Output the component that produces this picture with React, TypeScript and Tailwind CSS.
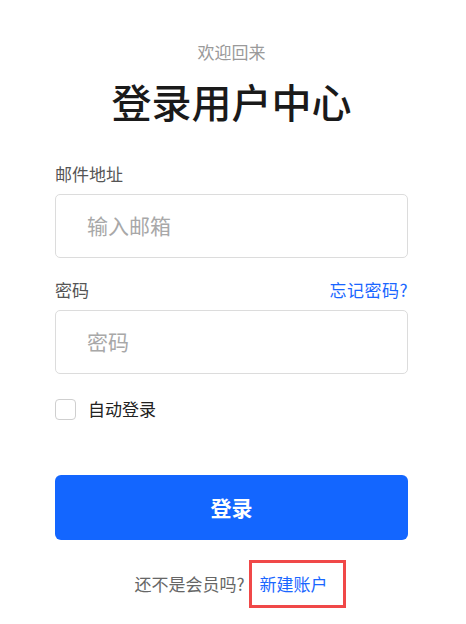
import React from "react";

export default function App() {
  const font = { fontFamily: '"Noto Sans CJK SC", "Noto Sans", sans-serif' };
  return (
    <div className="min-h-[624px] w-[466px] bg-white" style={font}>
      <div className="ml-[55px] w-[353px] pt-[40px] flex flex-col">
        <div className="text-center text-[17px] leading-[24px] text-[#9a9a9a]">欢迎回来</div>
        <div className="mt-[13px] text-center text-[40px] leading-[48px] font-medium text-[#1a1a1a]">登录用户中心</div>

        <div className="mt-[37px] text-[17px] leading-[24px] text-[#555]">邮件地址</div>
        <div className="mt-[8px] h-[64px] rounded-[5px] border border-[#dcdcdc] flex items-center pl-[31px] text-[21px] text-[#a8a8a8]">
          输入邮箱
        </div>

        <div className="mt-[20px] flex justify-between text-[17px] leading-[24px]">
          <span className="text-[#555]">密码</span>
          <span className="text-[#1a66ff] tracking-[0.5px]">忘记密码?</span>
        </div>
        <div className="mt-[8px] h-[64px] rounded-[5px] border border-[#dcdcdc] flex items-center pl-[31px] text-[21px] text-[#a8a8a8]">
          密码
        </div>

        <div className="mt-[23px] flex items-center h-[24px]">
          <div className="w-[21px] h-[21px] rounded-[4px] border-[1.5px] border-[#cfcfcf] bg-white" />
          <span className="ml-[12px] text-[17px] leading-[24px] text-[#222]">自动登录</span>
        </div>

        <div className="mt-[54px] h-[65px] rounded-[6px] bg-[#1366ff] flex items-center justify-center text-white text-[21px] font-bold">
          登录
        </div>

        <div className="mt-[20px] flex justify-center items-center pl-[17px]">
          <span className="text-[17px] leading-[24px] text-[#666]">还不是会员吗?</span>
          <span className="ml-[4px] border-[3px] border-[#f04848] pl-[8px] pr-[15px] py-[9px] text-[17px] leading-[24px] text-[#1a66ff]">
            新建账户
          </span>
        </div>
      </div>
    </div>
  );
}
